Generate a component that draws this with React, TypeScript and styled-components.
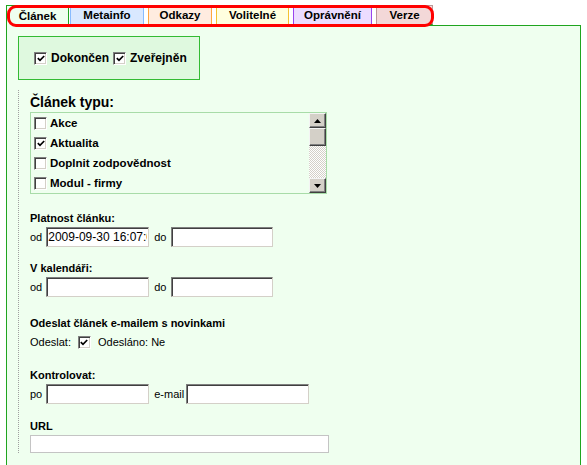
import React from 'react';
import styled, { createGlobalStyle } from 'styled-components';

const GlobalStyle = createGlobalStyle`
  html, body {
    margin: 0;
    overflow: hidden;
    background: #ffffff;
  }
  body {
    font-family: "Liberation Sans", Arial, sans-serif;
    font-size: 11px;
    color: #000;
  }
`;

const PANEL_BG = '#efffef';
const PANEL_BORDER = '#1fa51f';

const Page = styled.div`
  position: relative;
  width: 575px;
  padding: 5px 0 0 6px;
`;

const TabBar = styled.div`
  display: flex;
  position: relative;
  z-index: 1;
`;

const Tab = styled.div<{ $bg: string; $border: string; $w: number; $gap: number; $active?: boolean }>`
  box-sizing: border-box;
  width: ${p => p.$w}px;
  height: ${p => (p.$active ? 21 : 20)}px;
  margin-right: ${p => p.$gap}px;
  margin-bottom: ${p => (p.$active ? -1 : 0)}px;
  background: ${p => p.$bg};
  border: 1px solid ${p => p.$border};
  border-bottom: ${p => (p.$active ? 'none' : `1px solid ${PANEL_BORDER}`)};
  display: flex;
  align-items: center;
  justify-content: center;
  font-weight: bold;
  font-size: 11.5px;
  padding-bottom: ${p => (p.$active ? 1 : 0)}px;
`;

// red annotation drawn over the tab strip
const Highlight = styled.div`
  position: absolute;
  left: 7px;
  top: 5px;
  width: 427px;
  height: 22px;
  box-sizing: border-box;
  border: 3px solid #ff0000;
  border-radius: 9px;
  pointer-events: none;
  z-index: 2;
`;

const Panel = styled.div`
  box-sizing: border-box;
  background: ${PANEL_BG};
  border: 1px solid ${PANEL_BORDER};
  padding: 10px 0 30px 11px;
`;

const StatusBox = styled.div`
  box-sizing: border-box;
  display: inline-flex;
  align-items: center;
  height: 44px;
  padding: 0 12px 0 15px;
  background: #dff9df;
  border: 1px solid #33bb33;
  font-size: 12px;
  font-weight: bold;
`;

const Section = styled.div`
  margin-top: 10px;
  border-left: 1px dotted #a0a0a0;
  padding: 4px 0 0 11px;
`;

const Heading = styled.div`
  font-size: 14px;
  font-weight: bold;
  line-height: 17px;
  margin-bottom: 1px;
`;

const ListBox = styled.div`
  box-sizing: border-box;
  width: 297px;
  height: 82px;
  border: 1px solid #a8dca8;
  background: ${PANEL_BG};
  display: flex;
`;

const ListItems = styled.div`
  flex: 1;
`;

const ListItem = styled.div`
  height: 20px;
  display: flex;
  align-items: center;
  gap: 3px;
  padding-left: 3px;
  font-size: 11.5px;
  font-weight: bold;
`;

const ScrollBar = styled.div`
  width: 17px;
  display: flex;
  flex-direction: column;
`;

const ScrollPart = styled.div<{ $h: number }>`
  box-sizing: border-box;
  height: ${p => p.$h}px;
  background: #d4d0c8;
  border: 1px solid;
  border-color: #f4f4f4 #404040 #404040 #f4f4f4;
  box-shadow: inset -1px -1px 0 #808080;
  display: flex;
  align-items: center;
  justify-content: center;
`;

const ScrollTrack = styled.div`
  flex: 1;
  background: repeating-conic-gradient(#d4d0c8 0 25%, #ffffff 0 50%) 0 0 / 2px 2px;
`;

const CheckBox = styled.span`
  box-sizing: border-box;
  width: 13px;
  height: 13px;
  flex: none;
  display: inline-flex;
  align-items: center;
  justify-content: center;
  background: #fff;
  border: 1px solid;
  border-color: #808080 #ffffff #ffffff #808080;
  box-shadow: inset 1px 1px 0 #404040, inset -1px -1px 0 #d4d0c8;
`;

const CheckLabel = styled.span<{ $ml?: number }>`
  margin-left: 4px;
  margin-right: ${p => p.$ml ?? 0}px;
`;

const FieldGroup = styled.div<{ $top: number }>`
  margin-top: ${p => p.$top}px;
`;

const FieldLabel = styled.div`
  font-size: 11px;
  font-weight: bold;
  line-height: 14px;
  margin-bottom: 2px;
`;

const Row = styled.div`
  display: flex;
  align-items: center;
  min-height: 20px;
  font-size: 11px;
  color: #000;
`;

const InlineText = styled.span<{ $ml?: number; $mr?: number }>`
  margin-left: ${p => p.$ml ?? 0}px;
  margin-right: ${p => p.$mr ?? 4}px;
`;

const TextInput = styled.input<{ $w: number }>`
  box-sizing: border-box;
  width: ${p => p.$w}px;
  height: 20px;
  margin: 0;
  padding: 0 1px;
  background: #fff;
  border: 1px solid;
  border-color: #7f7f7f #d4d0c8 #d4d0c8 #7f7f7f;
  box-shadow: inset 1px 1px 0 #404040;
  font-family: "Liberation Sans", Arial, sans-serif;
  font-size: 12px;
  color: #000;
  outline: none;
`;

const UrlInput = styled.input`
  box-sizing: border-box;
  width: 299px;
  height: 18px;
  margin: 0;
  background: #fff;
  border: 1px solid #c4c4c4;
  outline: none;
`;

const Check = ({ checked }: { checked?: boolean }) => (
  <CheckBox>
    {checked && (
      <svg width="8" height="7" viewBox="0 0 8 7">
        <path d="M0.8 3.2 L3 5.4 L7.2 1" fill="none" stroke="#000" strokeWidth="1.7" />
      </svg>
    )}
  </CheckBox>
);

const Arrow = ({ up }: { up?: boolean }) => (
  <svg width="7" height="4" viewBox="0 0 7 4">
    <polygon points={up ? '3.5,0 7,4 0,4' : '0,0 7,0 3.5,4'} fill="#000" />
  </svg>
);

const tabs = [
  { label: 'Článek', bg: PANEL_BG, border: PANEL_BORDER, w: 63, gap: 1, active: true },
  { label: 'Metainfo', bg: '#d9e8ff', border: '#88bbff', w: 74, gap: 4 },
  { label: 'Odkazy', bg: '#ffece0', border: '#ffa640', w: 64, gap: 4 },
  { label: 'Volitelné', bg: '#ffffdf', border: '#f5c232', w: 73, gap: 4 },
  { label: 'Oprávnění', bg: '#ecdcff', border: '#9944ee', w: 79, gap: 4 },
  { label: 'Verze', bg: '#f3d8d8', border: '#bb9999', w: 57, gap: 0 },
];

const types = [
  { label: 'Akce', checked: false },
  { label: 'Aktualita', checked: true },
  { label: 'Doplnit zodpovědnost', checked: false },
  { label: 'Modul - firmy', checked: false },
];

export default function App() {
  return (
    <Page>
      <GlobalStyle />
      <TabBar>
        {tabs.map(t => (
          <Tab key={t.label} $bg={t.bg} $border={t.border} $w={t.w} $gap={t.gap} $active={t.active}>
            {t.label}
          </Tab>
        ))}
      </TabBar>
      <Highlight />
      <Panel>
        <StatusBox>
          <Check checked />
          <CheckLabel $ml={4}>Dokončen</CheckLabel>
          <Check checked />
          <CheckLabel>Zveřejněn</CheckLabel>
        </StatusBox>

        <Section>
          <Heading>Článek typu:</Heading>
          <ListBox>
            <ListItems>
              {types.map(t => (
                <ListItem key={t.label}>
                  <Check checked={t.checked} />
                  {t.label}
                </ListItem>
              ))}
            </ListItems>
            <ScrollBar>
              <ScrollPart $h={15}>
                <Arrow up />
              </ScrollPart>
              <ScrollPart $h={18} />
              <ScrollTrack />
              <ScrollPart $h={15}>
                <Arrow />
              </ScrollPart>
            </ScrollBar>
          </ListBox>

          <FieldGroup $top={17}>
            <FieldLabel>Platnost článku:</FieldLabel>
            <Row>
              <InlineText>od</InlineText>
              <TextInput $w={103} defaultValue="2009-09-30 16:07:00" />
              <InlineText $ml={5}>do</InlineText>
              <TextInput $w={102} />
            </Row>
          </FieldGroup>

          <FieldGroup $top={14}>
            <FieldLabel>V kalendáři:</FieldLabel>
            <Row>
              <InlineText>od</InlineText>
              <TextInput $w={103} />
              <InlineText $ml={5}>do</InlineText>
              <TextInput $w={102} />
            </Row>
          </FieldGroup>

          <FieldGroup $top={19}>
            <FieldLabel>Odeslat článek e-mailem s novinkami</FieldLabel>
            <Row>
              <InlineText $mr={7}>Odeslat:</InlineText>
              <Check checked />
              <InlineText $ml={7}>Odesláno: Ne</InlineText>
            </Row>
          </FieldGroup>

          <FieldGroup $top={16}>
            <FieldLabel>Kontrolovat:</FieldLabel>
            <Row>
              <InlineText>po</InlineText>
              <TextInput $w={103} />
              <InlineText $ml={5} $mr={2}>e-mail</InlineText>
              <TextInput $w={123} />
            </Row>
          </FieldGroup>

          <FieldGroup $top={15}>
            <FieldLabel>URL</FieldLabel>
            <UrlInput />
          </FieldGroup>
        </Section>
      </Panel>
    </Page>
  );
}
